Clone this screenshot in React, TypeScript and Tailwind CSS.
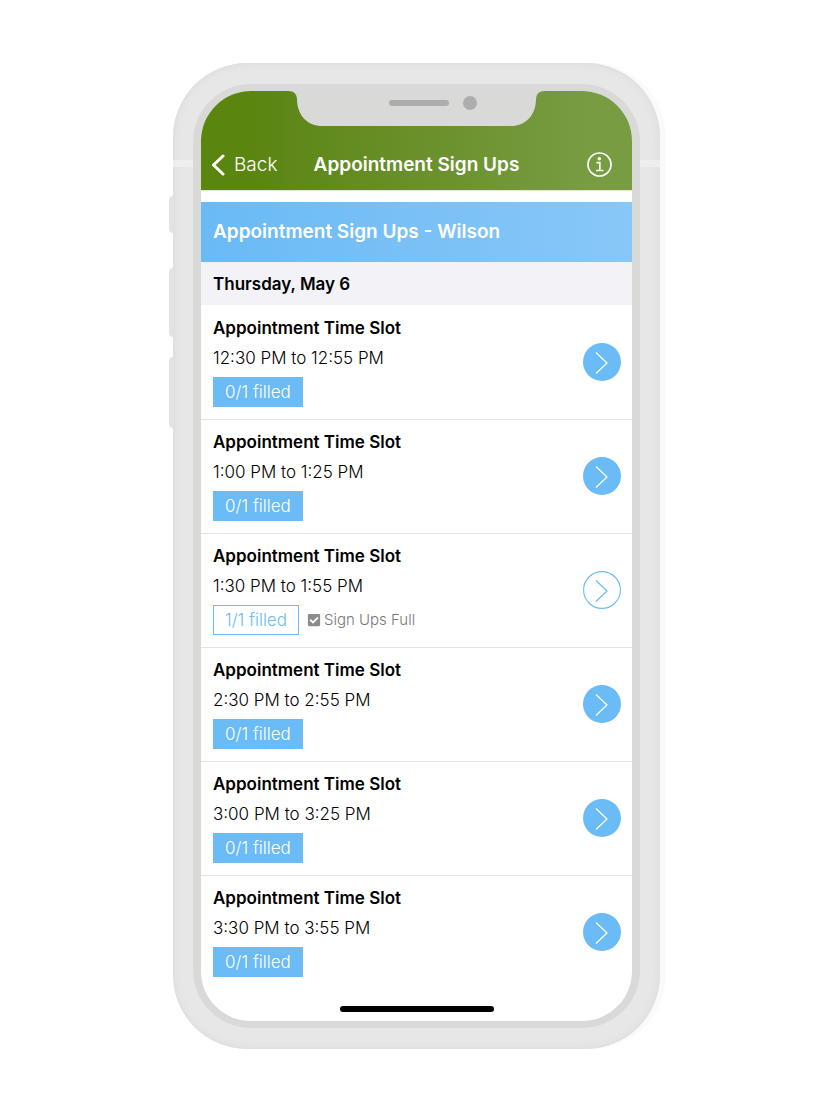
import { FaCheckSquare } from "react-icons/fa";

type Slot = {
  time: string;
  filled: number;
};

const slots: Slot[] = [
  { time: "12:30 PM to 12:55 PM", filled: 0 },
  { time: "1:00 PM to 1:25 PM", filled: 0 },
  { time: "1:30 PM to 1:55 PM", filled: 1 },
  { time: "2:30 PM to 2:55 PM", filled: 0 },
  { time: "3:00 PM to 3:25 PM", filled: 0 },
  { time: "3:30 PM to 3:55 PM", filled: 0 },
];

function Notch() {
  return (
    <div className="absolute inset-x-0 top-0 flex justify-center">
      <svg width="257" height="35" viewBox="0 0 257 35" className="block" aria-hidden="true">
        <path
          d="M0 0C6 0 9 3 9 9C9.500 25 20 35 34 35H223C237 35 247.500 25 248 9C248 3 251 0 257 0Z"
          fill="#d9d9d7"
        />
        <rect x="101" y="9" width="60" height="6" rx="3" fill="#adadad" />
        <circle cx="182" cy="12" r="7" fill="#adadad" />
      </svg>
    </div>
  );
}

function Header() {
  return (
    <header className="border-b border-[#e4e8dc] bg-linear-to-r from-[#5a850e] from-10% via-[#69902a] to-[#779c42] to-90% pt-12 text-white">
      <div className="grid h-[51px] grid-cols-[1fr_auto_1fr] items-center px-[10px]">
        <button type="button" className="flex items-center gap-2 text-[19px] leading-6 font-light">
          <svg width="15" height="22" viewBox="0 0 15 22" fill="none" aria-hidden="true">
            <path d="M12 2L2.500 11L12 20" stroke="currentColor" strokeWidth="3" strokeLinecap="round" strokeLinejoin="round" />
          </svg>
          Back
        </button>
        <h1 className="text-[19px] leading-6 font-semibold">Appointment Sign Ups</h1>
        <button type="button" aria-label="Information" className="mr-[10px] justify-self-end">
          <svg width="25" height="25" viewBox="0 0 25 25" fill="none" stroke="currentColor" aria-hidden="true">
            <circle cx="12.500" cy="12.500" r="11.500" strokeWidth="1.700" />
            <circle cx="12.300" cy="6.800" r="1.700" fill="currentColor" stroke="none" />
            <path d="M9.500 10.700H12.800V18.500M9 18.500H16.500" strokeWidth="1.700" />
          </svg>
        </button>
      </div>
    </header>
  );
}

function SlotRow({ slot }: { slot: Slot }) {
  const full = slot.filled === 1;

  return (
    <li className="flex items-center justify-between border-t border-[#e4e4e4] pt-[10px] pr-[11px] pb-3 pl-3 first:border-transparent">
      <div>
        <h3 className="text-[17px] leading-6 font-semibold">Appointment Time Slot</h3>
        <p className="mt-1.5 text-[17px] leading-6 font-light">{slot.time}</p>
        <div className="mt-[7px] flex items-center gap-2">
          <span
            className={
              full
                ? "border border-[#6abbf6] px-[11px] text-[17px] leading-7 font-light text-[#6abbf6]"
                : "border border-[#6abbf6] bg-[#6abbf6] px-[11px] text-[17px] leading-7 font-light text-white"
            }
          >
            {slot.filled}/1 filled
          </span>
          {full && (
            <span className="flex items-center gap-[3px] text-[15px] leading-6 font-light text-[#777777]">
              <FaCheckSquare size={14} className="text-[#8c8c8c]" />
              Sign Ups Full
            </span>
          )}
        </div>
      </div>
      <button
        type="button"
        aria-label={"Open " + slot.time}
        className={
          full
            ? "h-[38px] w-[38px] shrink-0 rounded-full text-[#6abbf6]"
            : "h-[38px] w-[38px] shrink-0 rounded-full bg-[#6abbf6] text-white"
        }
      >
        <svg width="38" height="38" viewBox="0 0 38 38" fill="none" stroke="currentColor" aria-hidden="true">
          {full && <circle cx="19" cy="19" r="18.400" strokeWidth="1.100" />}
          <path d="M13 9.500L24 20L13 30.500" strokeWidth="1.200" />
        </svg>
      </button>
    </li>
  );
}

export default function App() {
  return (
    <div className="flex min-h-screen justify-center bg-white py-[63px] pl-px font-['Inter','Liberation_Sans',sans-serif] text-black">
      {/* side buttons */}
      <div className="flex w-1 shrink-0 flex-col pt-[133px]">
        <div className="h-[37px] rounded-l-sm bg-[#e3e3e3]" />
        <div className="mt-[35px] h-[69px] rounded-l-sm bg-[#e3e3e3]" />
        <div className="mt-5 h-[71px] rounded-l-sm bg-[#e3e3e3]" />
      </div>

      <div className="relative w-full max-w-[487px] rounded-[74px] bg-[#e7e7e7] p-5 pt-[21px] pb-[21px] shadow-[6px_0_0_#fafafa,inset_0_0_8px_#d8d8d8]">
        <div className="absolute inset-x-0 top-[97px] h-[7px] bg-[#eeeeee]" />
        <div className="relative rounded-[58px] bg-[#d9d9d7] px-2 py-[7px]">
          <main className="relative overflow-hidden rounded-[50px] bg-white">
            <Notch />
            <Header />
            <h2 className="mt-[11px] bg-linear-to-r from-[#6abaf5] to-[#88c7f8] px-3 py-[18px] text-[19px] leading-6 font-semibold text-white">
              Appointment Sign Ups - Wilson
            </h2>
            <h2 className="bg-[#f2f2f7] px-3 pt-[10px] pb-[9px] text-[17px] leading-6 font-semibold">
              Thursday, May 6
            </h2>
            <ul>
              {slots.map((slot) => (
                <SlotRow key={slot.time} slot={slot} />
              ))}
            </ul>
            <div className="flex justify-center pt-[17px] pb-[9px]">
              <div className="h-1.5 w-[154px] rounded-full bg-black" />
            </div>
          </main>
        </div>
      </div>
    </div>
  );
}
